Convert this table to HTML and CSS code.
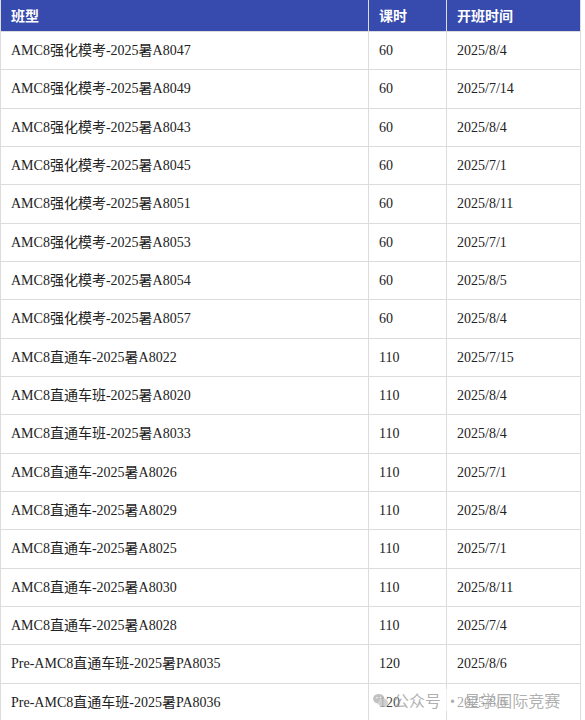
FILE: index.html
```html
<!DOCTYPE html>
<html lang="zh">
<head>
<meta charset="utf-8">
<link rel="stylesheet" href="styles.css">
</head>
<body>
<div class="wrap">
<table class="grid">
  <colgroup><col class="c1"><col class="c2"><col class="c3"></colgroup>
  <thead>
    <tr><th>班型</th><th>课时</th><th>开班时间</th></tr>
  </thead>
  <tbody>
    <tr><td>AMC8强化模考-2025暑A8047</td><td>60</td><td>2025/8/4</td></tr>
    <tr><td>AMC8强化模考-2025暑A8049</td><td>60</td><td>2025/7/14</td></tr>
    <tr><td>AMC8强化模考-2025暑A8043</td><td>60</td><td>2025/8/4</td></tr>
    <tr><td>AMC8强化模考-2025暑A8045</td><td>60</td><td>2025/7/1</td></tr>
    <tr><td>AMC8强化模考-2025暑A8051</td><td>60</td><td>2025/8/11</td></tr>
    <tr><td>AMC8强化模考-2025暑A8053</td><td>60</td><td>2025/7/1</td></tr>
    <tr><td>AMC8强化模考-2025暑A8054</td><td>60</td><td>2025/8/5</td></tr>
    <tr><td>AMC8强化模考-2025暑A8057</td><td>60</td><td>2025/8/4</td></tr>
    <tr><td>AMC8直通车-2025暑A8022</td><td>110</td><td>2025/7/15</td></tr>
    <tr><td>AMC8直通车班-2025暑A8020</td><td>110</td><td>2025/8/4</td></tr>
    <tr><td>AMC8直通车班-2025暑A8033</td><td>110</td><td>2025/8/4</td></tr>
    <tr><td>AMC8直通车-2025暑A8026</td><td>110</td><td>2025/7/1</td></tr>
    <tr><td>AMC8直通车-2025暑A8029</td><td>110</td><td>2025/8/4</td></tr>
    <tr><td>AMC8直通车-2025暑A8025</td><td>110</td><td>2025/7/1</td></tr>
    <tr><td>AMC8直通车-2025暑A8030</td><td>110</td><td>2025/8/11</td></tr>
    <tr><td>AMC8直通车-2025暑A8028</td><td>110</td><td>2025/7/4</td></tr>
    <tr><td>Pre-AMC8直通车班-2025暑PA8035</td><td>120</td><td>2025/8/6</td></tr>
    <tr><td>Pre-AMC8直通车班-2025暑PA8036</td><td>120</td><td>2025/8/6</td></tr>
  </tbody>
</table>
<div class="watermark">
  <svg class="wm-icon" viewBox="0 0 24 24" width="17" height="17" aria-hidden="true">
    <ellipse cx="9.5" cy="9.5" rx="8" ry="6.8" fill="#b8b8b8"/>
    <ellipse cx="15.5" cy="15" rx="7" ry="5.8" fill="#c8c8c8"/>
    <circle cx="7" cy="8" r="1" fill="#fff"/>
    <circle cx="12" cy="8" r="1" fill="#fff"/>
  </svg>
  <span>公众号 · 星学国际竞赛</span>
</div>
</div>
</body>
</html>
```

FILE: styles.css
```css
html, body {
  margin: 0;
  padding: 0;
  background: #fff;
}
.wrap {
  position: relative;
  width: 585px;
  height: 720px;
  overflow: hidden;
}
.grid {
  border-collapse: collapse;
  width: 580px;
  table-layout: fixed;
  font-family: "Liberation Serif", "Noto Sans CJK SC", serif;
  font-size: 14px;
  color: #222;
}
.c1 { width: 368px; }
.c2 { width: 78px; }
.c3 { width: 134px; }
.grid th {
  background: #374aad;
  color: #fff;
  font-family: "Noto Sans CJK SC", sans-serif;
  font-weight: bold;
  font-size: 14px;
  text-align: left;
  height: 29px;
  padding: 0 10px 2px;
  border: 1px solid #dcdcdc;
  border-top: none;
  line-height: 20px;
}
.grid td {
  height: 36.33px;
  padding: 1px 10px 0;
  border: 1px solid #dcdcdc;
  line-height: 20px;
  white-space: nowrap;
}
.watermark {
  position: absolute;
  left: 372px;
  top: 689px;
  display: flex;
  align-items: center;
  gap: 4px;
  padding: 0 4px 0 0;
  font-family: "Noto Sans CJK SC", sans-serif;
  font-size: 16px;
  line-height: 22px;
  color: rgba(150,150,150,0.75);
  background: linear-gradient(90deg, rgba(255,255,255,0) 0%, rgba(255,255,255,0.6) 35%, rgba(255,255,255,0.6) 100%);
}
.wm-icon { opacity: 0.85; }
```
